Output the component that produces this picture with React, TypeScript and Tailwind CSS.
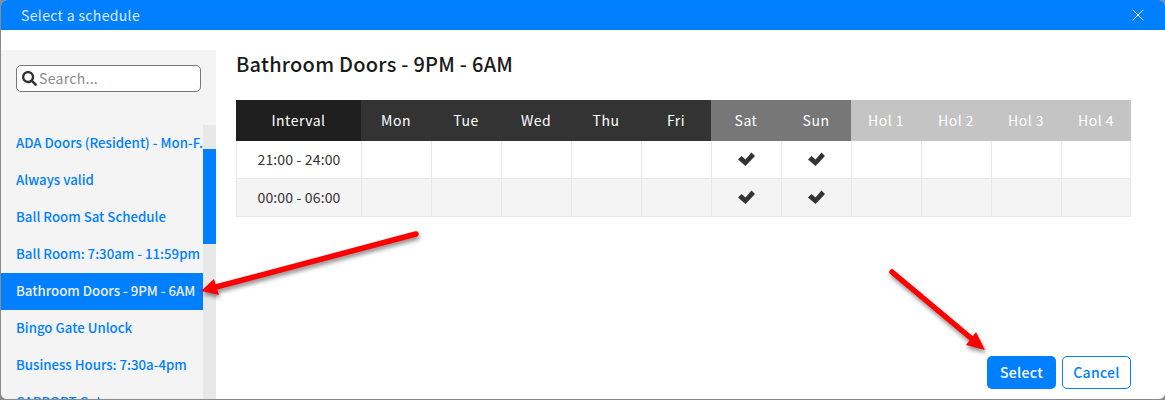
import { FaSearch } from "react-icons/fa"
import { X } from "lucide-react"

const schedules = [
  "ADA Doors (Resident) - Mon-F...",
  "Always valid",
  "Ball Room Sat Schedule",
  "Ball Room: 7:30am - 11:59pm",
  "Bathroom Doors - 9PM - 6AM",
  "Bingo Gate Unlock",
  "Business Hours: 7:30a-4pm",
  "CARPORT Gates",
]

const workdays = ["Mon", "Tue", "Wed", "Thu", "Fri"]
const weekend = ["Sat", "Sun"]
const holidays = ["Hol 1", "Hol 2", "Hol 3", "Hol 4"]
const allDays = [...workdays, ...weekend, ...holidays]

function Check() {
  return (
    <svg className="mx-auto mb-px" width="19" height="16" viewBox="0 0 19 16" fill="#333333">
      <polygon points="1,8.5 4.5,5 8.5,8.5 14.5,1.5 18,5 8.5,15" />
    </svg>
  )
}

function Row({ interval, shaded }: { interval: string; shaded?: boolean }) {
  return (
    <tr className={shaded ? "h-[38px] bg-[#f4f4f4]" : "h-[38px] bg-white"}>
      <td className="border-b border-l border-[#e8e8e8] text-center tracking-[0.15px]">{interval}</td>
      {allDays.map((day) => (
        <td key={day} className="border-b border-l border-[#e8e8e8] last:border-r">
          {weekend.includes(day) && <Check />}
        </td>
      ))}
    </tr>
  )
}

function Arrows() {
  return (
    <svg
      className="pointer-events-none absolute left-0 top-0 drop-shadow-[1px_3px_2px_rgba(0,0,0,0.45)]"
      width="1165"
      height="400"
      fill="#ff0000"
    >
      <path d="M416 234 L216 287" stroke="#ff0000" strokeWidth="5.5" strokeLinecap="round" />
      <polygon points="201,291 214,279 219,295" />
      <path d="M892 272 L972 339" stroke="#ff0000" strokeWidth="5.5" strokeLinecap="round" />
      <polygon points="985,350 976,332 966,345" />
    </svg>
  )
}

export default function App() {
  return (
    <div className="relative h-[400px] w-[1165px] overflow-hidden bg-[#8a8a8a] pb-px pl-px font-['Noto_Sans_CJK_SC','Source_Sans_Pro',sans-serif] text-[14px] tracking-[0.2px] text-[#333333]">
      <div className="flex h-full flex-col overflow-hidden rounded-md bg-white">
        {/* Header */}
        <div className="flex h-[30px] shrink-0 items-center justify-between bg-[#007fff] pl-5 pr-[17px] text-white">
          <span className="tracking-[0.35px] text-white/85">Select a schedule</span>
          <X size={20} strokeWidth={1.2} />
        </div>

        <div className="mt-5 flex min-h-0 flex-1">
          {/* Sidebar */}
          <div className="flex w-[215px] shrink-0 flex-col bg-[#f4f4f4]">
            <div className="h-[75px] shrink-0 pl-[15px] pt-[15px]">
              <div className="flex h-[27px] w-[185px] items-center gap-[2px] rounded-[5px] border border-[#777777] bg-white pl-[5px]">
                <FaSearch className="text-[15px] text-[#333333]" />
                <span className="tracking-[0.3px] text-[#8a8a8a]">Search...</span>
              </div>
            </div>
            <div className="flex min-h-0 flex-1 overflow-hidden">
              <ul className="w-[202px] shrink-0 font-medium tracking-normal">
                {schedules.map((name) => {
                  const selected = name.startsWith("Bathroom")
                  return (
                    <li
                      key={name}
                      className={
                        selected
                          ? "flex h-[37px] items-center overflow-hidden whitespace-nowrap bg-[#007fff] pb-[2px] pl-[15px] text-[13.25px] text-[#f0f0f0]"
                          : "flex h-[37px] items-center overflow-hidden whitespace-nowrap pb-[2px] pl-[15px] text-[13.25px] text-[#007fff]"
                      }
                    >
                      {name}
                    </li>
                  )
                })}
              </ul>
              <div className="w-[13px] shrink-0 bg-[#e8e8e8] pt-6">
                <div className="h-[95px] bg-[#007fff]" />
              </div>
            </div>
          </div>

          {/* Main */}
          <div className="flex min-w-0 flex-1 flex-col pb-[10px] pl-5 pr-[33px]">
            <h2 className="-mt-px flex h-[30px] items-center text-[20px] font-medium tracking-[0.25px] text-[#1a1a1a]">
              Bathroom Doors - 9PM - 6AM
            </h2>
            <table className="mt-[21px] w-[895px] table-fixed border-separate border-spacing-0 tracking-[0.5px]">
              <thead>
                <tr className="h-[41px] text-white">
                  <th className="w-[125px] bg-[#1f1f1f] font-normal">Interval</th>
                  {workdays.map((day) => (
                    <th key={day} className="w-[70px] bg-[#333333] font-normal">
                      {day}
                    </th>
                  ))}
                  {weekend.map((day) => (
                    <th key={day} className="w-[70px] bg-[#777777] font-normal">
                      {day}
                    </th>
                  ))}
                  {holidays.map((day) => (
                    <th key={day} className="w-[70px] bg-[#c4c4c4] font-normal text-white">
                      {day}
                    </th>
                  ))}
                </tr>
              </thead>
              <tbody>
                <Row interval="21:00 - 24:00" />
                <Row interval="00:00 - 06:00" shaded />
              </tbody>
            </table>
            <div className="mr-px mt-auto flex justify-end gap-[6px] tracking-[0.3px]">
              <button className="h-[33px] w-[69px] rounded-[5px] bg-[#007fff] font-medium text-white">
                Select
              </button>
              <button className="h-[33px] w-[69px] rounded-[5px] border border-[#007fff] bg-white font-medium text-[#007fff]">
                Cancel
              </button>
            </div>
          </div>
        </div>
      </div>
      <Arrows />
    </div>
  )
}
